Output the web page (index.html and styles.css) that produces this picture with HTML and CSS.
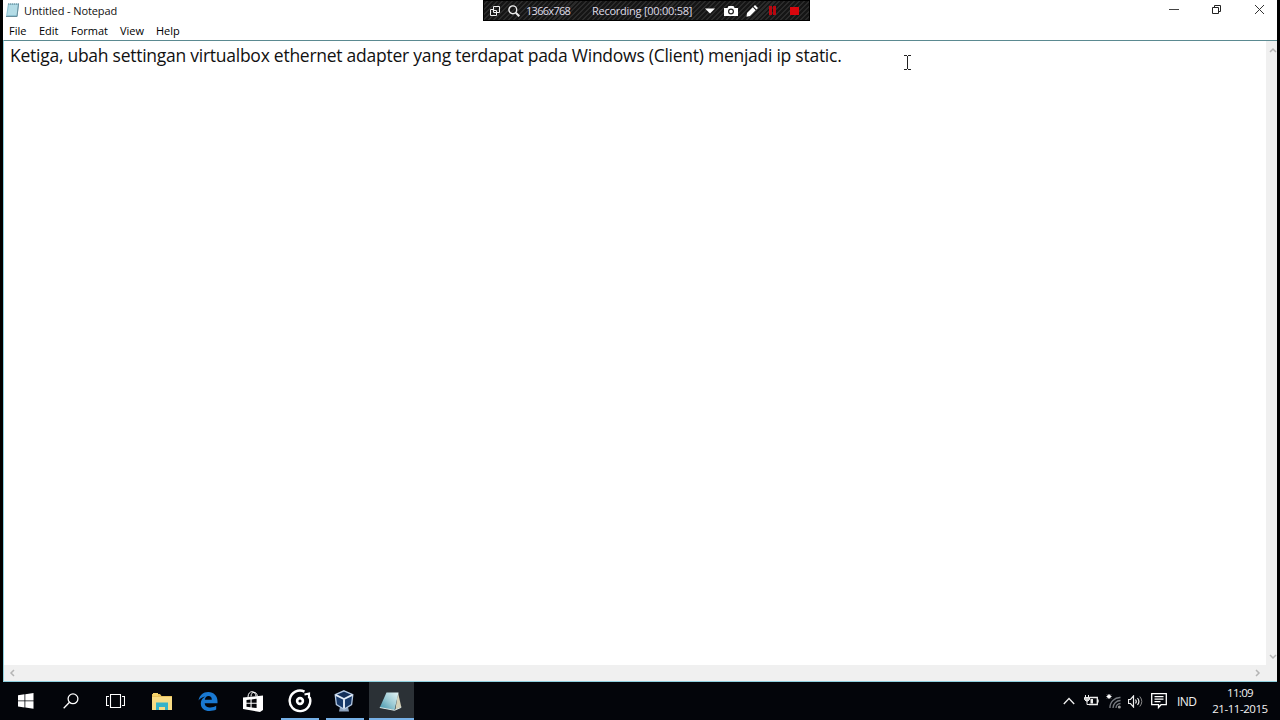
FILE: index.html
```html
<!DOCTYPE html>
<html lang="id">
<head>
    <meta charset="UTF-8">
    <meta name="viewport" content="width=device-width, initial-scale=1.0">
    <title>Untitled - Notepad</title>
    <link rel="stylesheet" href="styles.css">
</head>
<body>
    <div class="screen">
        <!-- Jendela Notepad -->
        <div class="window">
            <div class="title-bar">
                <svg class="app-icon" width="15" height="16" viewBox="0 0 15 16">
                    <path d="M3 1.500h11l-1.500 13H1z" fill="#8fc3d3"/>
                    <path d="M4 3h9l-1.400 10H2.300z" fill="#b4dce6"/>
                    <path d="M3 2h11" stroke="#6b8790" stroke-dasharray="1 1"/>
                    <path d="M13.500 2l-1.500 12.500H1" fill="none" stroke="#6a8e9b"/>
                </svg>
                <span class="title">Untitled - Notepad</span>
                <div class="window-buttons">
                    <svg width="11" height="11" viewBox="0 0 11 11"><path d="M1 5.500h10" stroke="#444"/></svg>
                    <svg width="11" height="11" viewBox="0 0 11 11"><path d="M1.500 3.500h6v6h-6zM3.500 3V1.500h6v6H8" fill="none" stroke="#222"/></svg>
                    <svg width="11" height="11" viewBox="0 0 11 11"><path d="M1 1l9 9M10 1l-9 9" stroke="#333"/></svg>
                </div>
            </div>
            <div class="menu">
                <span class="m-file">File</span>
                <span class="m-edit">Edit</span>
                <span class="m-format">Format</span>
                <span class="m-view">View</span>
                <span class="m-help">Help</span>
            </div>
            <div class="editor">
                <div class="text-area"><span class="line">Ketiga, ubah settingan virtualbox ethernet adapter yang terdapat pada Windows (Client) menjadi ip static.</span></div>
                <div class="scroll-v">
                    <svg width="8" height="6" viewBox="0 0 8 6"><path d="M1 5l3-3 3 3" fill="none" stroke="#b5b5b5" stroke-width="1.500"/></svg>
                    <svg width="8" height="6" viewBox="0 0 8 6"><path d="M1 1l3 3 3-3" fill="none" stroke="#b5b5b5" stroke-width="1.500"/></svg>
                </div>
                <div class="scroll-h">
                    <svg width="6" height="8" viewBox="0 0 6 8"><path d="M5 1L2 4l3 3" fill="none" stroke="#b5b5b5" stroke-width="1.500"/></svg>
                    <svg width="6" height="8" viewBox="0 0 6 8"><path d="M1 1l3 3-3 3" fill="none" stroke="#b5b5b5" stroke-width="1.500"/></svg>
                </div>
            </div>
        </div>

        <!-- Taskbar -->
        <div class="taskbar">
            <div class="apps">
                <div class="app start">
                    <svg width="16" height="16" viewBox="0 0 16 16" fill="#fff"><path d="M0 2.200l6.500-.9v6.200H0zM7.300 1.200L15.500 0v7.500H7.300zM0 8.300h6.500v6.200L0 13.600zM7.300 8.300h8.200v7.500l-8.200-1.200z"/></svg>
                </div>
                <div class="app search">
                    <svg width="16" height="16" viewBox="0 0 16 16" fill="none" stroke="#fff" stroke-width="1.300"><circle cx="10" cy="5.800" r="4.900"/><path d="M6.500 9.300L.7 15.200"/></svg>
                </div>
                <div class="app tasks">
                    <svg width="19" height="14" viewBox="0 0 19 14" fill="none" stroke="#fff"><path d="M4.500.5h10v13h-10zM3 2.500H.5v9H3M16 2.500h2.500v9H16" stroke-width="1.100"/></svg>
                </div>
                <div class="app files">
                    <svg width="20" height="17" viewBox="0 0 20 17">
                        <path d="M0 1h8l1.500 2H20v14H0z" fill="#e9c25c"/>
                        <path d="M1 0h5v3H1z" fill="#f5d36a"/>
                        <path d="M0 4h20v13H0z" fill="#f8dc85"/>
                        <path d="M4 17V9.500h12V17h-3v-3H7v3z" fill="#35b3c9"/>
                    </svg>
                </div>
                <div class="app edge">
                    <svg width="20" height="19" viewBox="0 0 20 19"><path d="M.5 8.500C1.600 3 5.200 0 10.200 0c5.700 0 9.300 4 9.300 9v2.200H6.700c.2 3 2.700 4.300 5.600 4.300 2.200 0 4.100-.6 5.900-1.700v3.800c-1.900 1-4.100 1.400-6.600 1.400-5.300 0-8.800-2.900-8.800-7.600 0-3.100 1.700-5.500 4.400-6.900C4.300 5 2.100 6.400.5 8.500zM6.800 7.800h7c0-2.400-1.100-3.700-3.300-3.700-2 0-3.400 1.500-3.700 3.700z" fill="#1979d2"/></svg>
                </div>
                <div class="app store">
                    <svg width="20" height="21" viewBox="0 0 20 21">
                        <path d="M5 6C5 2.500 7 .7 9 .7S13 2.500 13 5.500M8 5.500C8 2.500 9.500 1.300 11 1.300s3.300 1.200 3.300 4.200" fill="none" stroke="#fff"/>
                        <path d="M0 6.500L20 4.500v14.500l-3 2L0 18z" fill="#fff"/>
                        <path d="M3.500 9l4-.5v3.300h-4zM8.600 8.400l5-.6v4h-5zM3.500 12.800h4v3.500l-4-.6zM8.600 12.800h5V17l-5-.6z" fill="#05060a"/>
                    </svg>
                </div>
                <div class="app groove running">
                    <svg width="24" height="24" viewBox="0 0 24 24" fill="none" stroke="#fff">
                        <path d="M16.500 2.600A10.300 10.300 0 1 0 21.600 8.200" stroke-width="2.400"/>
                        <circle cx="12" cy="12" r="2.900" stroke-width="2.600"/>
                        <path d="M16.500 5.500L21 4.500v4.800" stroke-width="2.200"/>
                    </svg>
                </div>
                <div class="app vbox running">
                    <svg width="20" height="22" viewBox="0 0 20 22">
                        <path d="M6 17h8l1 4.500H5z" fill="#8da2bd"/>
                        <path d="M10 .8l8.800 3.800-1.200 10L10 19.200 2.400 14.600 1.200 4.600z" fill="#183969" stroke="#b3c8e2" stroke-width="1.300"/>
                        <path d="M10 2.300l6.500 2.700L10 8 3.500 5z" fill="#142f58"/>
                        <path d="M1.600 4.900L10 9l8.400-4.100M10 9v9.500" fill="none" stroke="#e3ecf7" stroke-width="1.900"/>
                    </svg>
                </div>
                <div class="app notepad running active">
                    <svg width="23" height="21" viewBox="0 0 23 21">
                        <defs>
                            <linearGradient id="page" x1="0" y1="1" x2="1" y2="0"><stop offset="0" stop-color="#398fa8"/><stop offset=".5" stop-color="#9bcad4"/><stop offset="1" stop-color="#e5f4f4"/></linearGradient>
                        </defs>
                        <path d="M19 1.500L22.300 16l-6 3z" fill="#d5d2b9"/>
                        <path d="M7.500 1.500h12L15.500 19.300.8 16.500z" fill="url(#page)"/>
                        <path d="M.8 16.500l14.700 2.800 6.800-3" fill="none" stroke="#dbe8e7"/>
                    </svg>
                </div>
            </div>
            <div class="tray">
                <svg class="chevron" width="12" height="8" viewBox="0 0 12 8"><path d="M.8 7L6 1.500 11.200 7" fill="none" stroke="#eee" stroke-width="1.300"/></svg>
                <svg class="battery" width="15" height="12" viewBox="0 0 15 12" fill="none" stroke="#eee"><path d="M5.500 2.500h7.800v7H5M14 4.500v3" stroke-width="1.300"/><path d="M6.500 4h2.500v4.500H6.500z" fill="#eee" stroke="none"/><path d="M1.500 0v2.500M4.500 0v2.500M3 6v3.500h3"/><path d="M.5 2.500h5v2L4 6H2L.5 4.500z" fill="#ccc"/></svg>
                <svg class="wifi" width="16" height="15" viewBox="0 0 16 15" fill="none"><path d="M4 14A10 10 0 0 1 14.500 3.500M7 14A7.500 7.500 0 0 1 14.500 6.500M10 14a4.500 4.500 0 0 1 4.500-4.500" stroke="#777b80" stroke-width="1.300"/><circle cx="13.300" cy="13" r="1.500" fill="#999"/><circle cx="3" cy="2.500" r="1.500" fill="#fff"/><path d="M3 0v5M.5 2.500h5M1.200.7l3.600 3.600M4.800.7L1.200 4.300" stroke="#fff"/></svg>
                <svg class="volume" width="15" height="13" viewBox="0 0 15 13" fill="none" stroke="#eee"><path d="M.5 4.500h2l3-3.500v11l-3-3.500h-2z" stroke-width="1.200"/><path d="M7.500 4.500q1.600 2 0 4M9.500 3q2.800 3.500 0 7"  stroke-width="1.200"/><path d="M11.800 1.500q4 5 0 10" stroke="#888"/></svg>
                <svg class="action" width="16" height="16" viewBox="0 0 16 16" fill="none" stroke="#fff" stroke-width="1.300"><path d="M.7.700h14.600v11H10L7.500 14.500V11.700H.7zM3.500 3.700h9M3.500 6.200h9M3.500 8.700h6"/></svg>
                <span class="lang">IND</span>
                <div class="clock">
                    <span class="time">11:09</span>
                    <span class="date">21-11-2015</span>
                </div>
            </div>
        </div>

        <!-- Bilah perekam layar -->
        <div class="recorder">
            <svg class="r-window" width="10" height="10" viewBox="0 0 10 10" fill="none" stroke="#eee"><path d="M3.500.5h6v6h-6zM3 3.500H.5v6h6V7M4 4.500h2.500V6"/></svg>
            <svg class="r-zoom" width="12" height="12" viewBox="0 0 12 12" fill="none" stroke="#eee"><circle cx="4.800" cy="4.800" r="3.900" stroke-width="1.400"/><path d="M7.800 7.800l3.500 3.500" stroke-width="2"/></svg>
            <span class="r-size">1366x768</span>
            <span class="r-status">Recording [00:00:58]</span>
            <svg class="r-arrow" width="10" height="6" viewBox="0 0 10 6"><path d="M0 .5h10L5 5.500z" fill="#fff"/></svg>
            <svg class="r-camera" width="14" height="10" viewBox="0 0 14 10"><path d="M0 2h3.500l1-2h5l1 2H14v8H0z" fill="#fff"/><circle cx="7" cy="5.500" r="2.400" fill="none" stroke="#222" stroke-width="1.200"/></svg>
            <svg class="r-pen" width="12" height="12" viewBox="0 0 12 12" fill="#fff"><path d="M1 8l5.700-5.700 3 3L4 11l-3.500.7zM7.500 1.500L9 0l3 3-1.500 1.500z"/></svg>
            <svg class="r-pause" width="7" height="9" viewBox="0 0 7 9" fill="#b8070f"><path d="M0 0h3v9H0zM4 0h3v9H4z"/></svg>
            <span class="r-stop"></span>
        </div>

        <!-- Kursor teks -->
        <svg class="cursor" width="7" height="15" viewBox="0 0 7 15"><path d="M0 .5h3M4 .5h3M3.500 1v13M0 14.500h3M4 14.500h3" stroke="#222" fill="none"/></svg>
    </div>
</body>
</html>
```
FILE: styles.css
```css
:root {
    --line-color: #5b8a91;
    --scroll-bg: #f0f0f0;
    --running-color: #76b0e6;
}
* {
    box-sizing: border-box;
}
body {
    margin: 0;
    font-family: "Open Sans", "Noto Sans", sans-serif;
    overflow: hidden;
}
svg {
    display: block;
    flex: none;
}
.screen {
    position: relative;
    display: flex;
    flex-direction: column;
    width: 1280px;
    height: 720px;
    background: #000;
}
.window {
    display: flex;
    flex-direction: column;
    height: 682px;
    margin: 0 3px;
    background: #fff;
}
.title-bar {
    display: flex;
    height: 21px;
    padding: 2px 12px 0 2px;
    color: #111;
    font-size: 11px;
    line-height: 18px;
}
.title {
    margin-left: 4px;
    letter-spacing: -0.1px;
}
.window-buttons {
    display: flex;
    gap: 32px;
    margin: 2px 0 0 auto;
}
.menu {
    display: flex;
    height: 19px;
    padding-left: 6px;
    color: #000;
    font-size: 11px;
    line-height: 20px;
}
.m-file {
    width: 30px;
}
.m-edit {
    width: 32px;
}
.m-format {
    width: 49px;
}
.m-view {
    width: 36px;
}
.editor {
    display: grid;
    grid-template-columns: 1fr 11px;
    grid-template-rows: 1fr 16px;
    flex: 1;
    border: 1px solid #8fd0df;
    border-top-color: var(--line-color);
    border-right: 0;
}
.text-area {
    padding: 2px 0 0 6px;
    color: #111;
    font-size: 17.5px;
    letter-spacing: -0.258px;
    line-height: 24px;
    white-space: nowrap;
}
.scroll-v {
    display: flex;
    flex-direction: column;
    justify-content: space-between;
    align-items: center;
    padding: 6px 0 5px 2px;
    background: var(--scroll-bg);
}
.scroll-h {
    display: flex;
    grid-column: 1 / 3;
    justify-content: space-between;
    align-items: center;
    padding: 0 16px 0 5px;
    background: var(--scroll-bg);
}
.taskbar {
    display: flex;
    justify-content: space-between;
    height: 38px;
    background: #03050a;
}
.apps {
    display: flex;
    gap: 1px;
    padding-left: 3px;
}
.app {
    display: flex;
    justify-content: center;
    align-items: center;
    width: 45px;
}
.running {
    padding-top: 2px;
    border-bottom: 2px solid var(--running-color);
}
.start {
    width: 45px;
}
.search {
    width: 44px;
}
.tasks {
    width: 43px;
}
.files {
    width: 47px;
}
.edge {
    width: 44px;
}
.store {
    width: 44px;
}
.groove {
    width: 38px;
    margin-left: 5px;
}
.vbox {
    width: 38px;
    margin-left: 6px;
    padding-right: 3px;
}
.notepad {
    margin-left: 4px;
    padding-right: 2px;
}
.active {
    background: #2b3136;
}
.tray {
    display: flex;
    align-items: center;
    padding-right: 12px;
    color: #f2f2f2;
}
.battery {
    margin-left: 9px;
}
.wifi {
    margin-left: 7px;
}
.volume {
    margin-left: 6px;
}
.action {
    margin-left: 8px;
}
.lang {
    width: 19px;
    margin-left: 10px;
    font-size: 12px;
    letter-spacing: -0.6px;
}
.clock {
    display: flex;
    flex-direction: column;
    align-items: center;
    width: 56px;
    margin-left: 16px;
    font-size: 11.5px;
    line-height: 16px;
    white-space: nowrap;
}
.time {
    letter-spacing: -0.7px;
}
.date {
    letter-spacing: -0.45px;
}
.recorder {
    position: absolute;
    top: 0;
    left: 483px;
    display: flex;
    align-items: center;
    width: 327px;
    height: 21px;
    padding-left: 6px;
    border: 1px solid #000;
    background: repeating-linear-gradient(135deg, #151515 0, #151515 2px, #2b2b2b 2px, #2b2b2b 3.500px);
    color: #dedae6;
    font-size: 11px;
    white-space: nowrap;
}
.r-zoom {
    margin-left: 8px;
}
.r-size {
    width: 45px;
    margin-left: 6px;
    letter-spacing: -0.7px;
}
.r-status {
    width: 100px;
    margin-left: 21px;
    letter-spacing: -0.25px;
}
.r-arrow {
    margin-left: 13px;
}
.r-camera {
    margin-left: 9px;
}
.r-pen {
    margin-left: 8px;
}
.r-pause {
    margin-left: 11px;
}
.r-stop {
    width: 9px;
    height: 8px;
    margin-left: 14px;
    background: #d9060d;
}
.cursor {
    position: absolute;
    top: 55px;
    left: 904px;
}
```
